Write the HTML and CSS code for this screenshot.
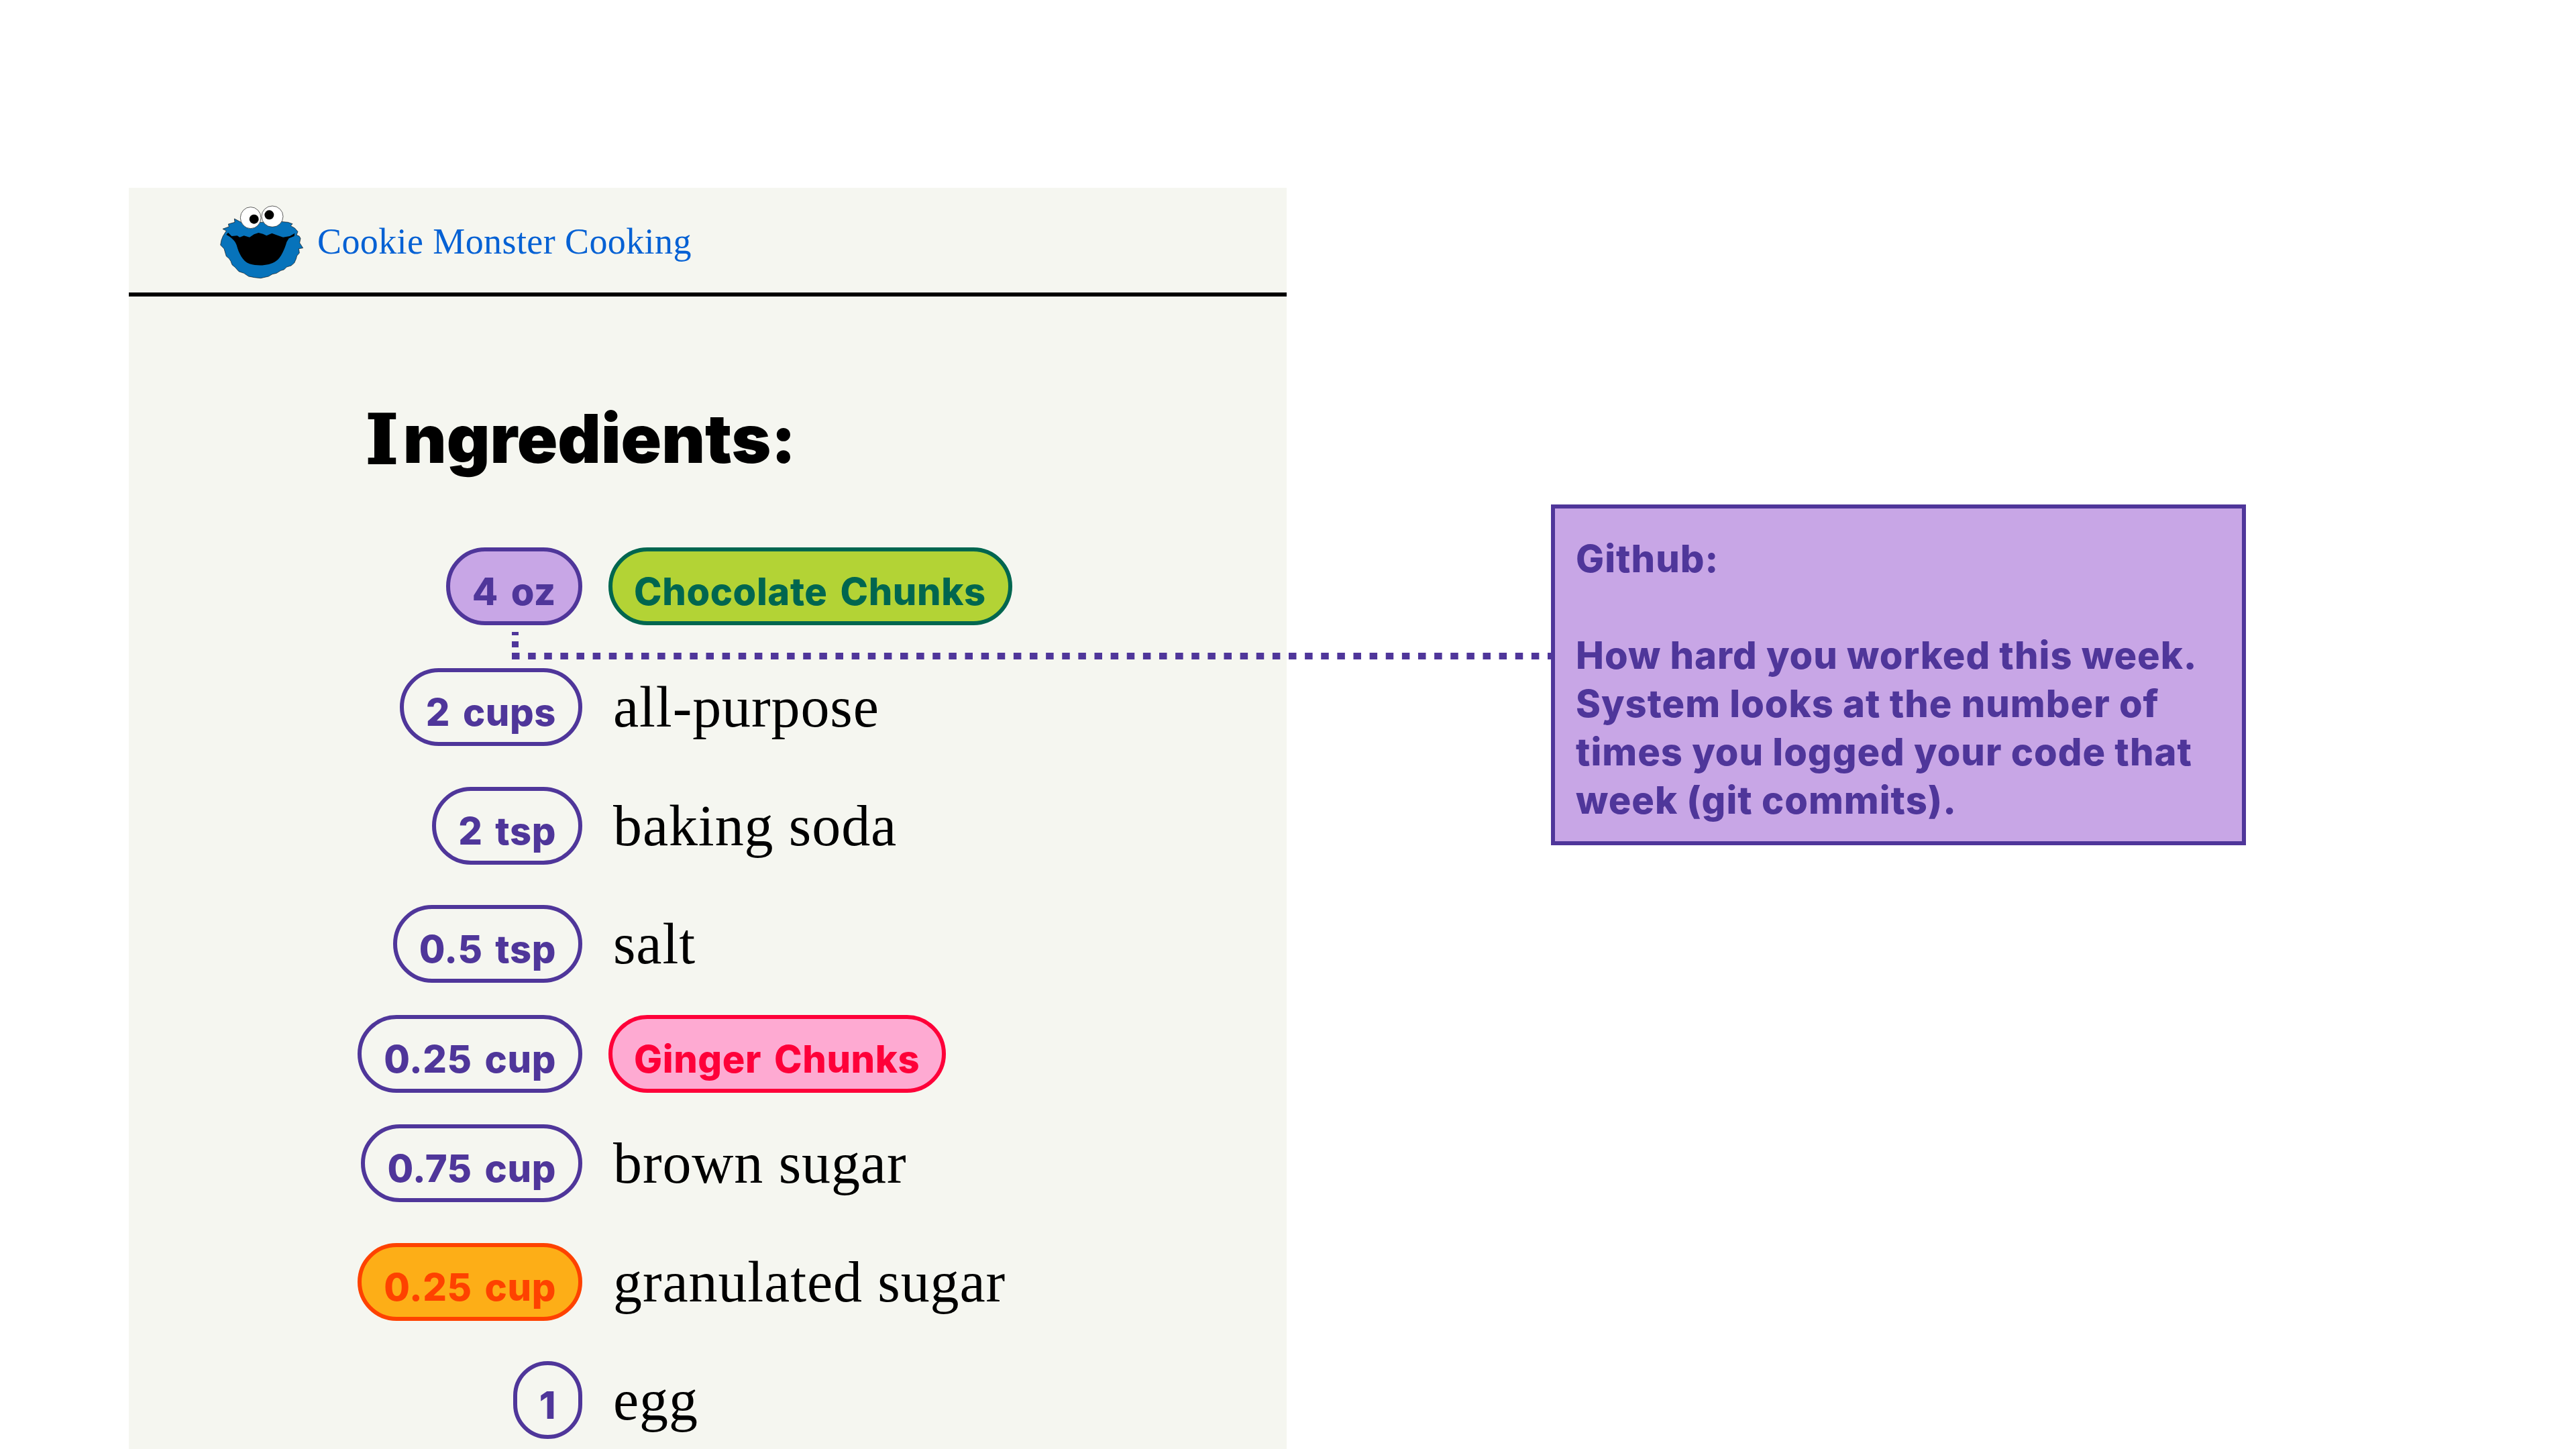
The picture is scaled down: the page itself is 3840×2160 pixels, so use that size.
FILE: index.html
```html
<!DOCTYPE html>
<html lang="en">
<head>
<meta charset="utf-8">
<title>Cookie Monster Cooking</title>
<link rel="stylesheet" href="styles.css">
</head>
<body>
<div class="stage">
  <main class="panel">
    <header class="topbar">
      <svg class="logo" viewBox="0 0 408 348" width="136" height="116" aria-hidden="true">
        <path class="fur" d="M82 72 L105 84 L120 92 L290 84 L300 86 L322 88 L342 95 L334 104 L352 114 L366 130 L360 145 L372 150 L378 160 L374 180 L389 203 L370 206 L373 225 L362 238 L358 252 L350 270 L336 282 L316 288 L304 300 L290 304 L270 316 L252 320 L235 330 L200 338 L172 335 L146 330 L125 316 L102 308 L86 290 L72 278 L66 262 L58 250 L46 240 L36 206 L20 190 L24 168 L31 150 L46 126 L30 118 L58 108 L55 96 L84 88 Z"/>
        <path class="mouth" d="M46 144 L54 134 L70 150 L95 148 L106 155 L125 148 L150 155 L170 142 L190 135 L210 140 L226 148 L250 137 L270 145 L300 155 L330 150 L352 137 L350 150 L326 160 L316 176 C308 205 292 245 268 262 C240 282 190 286 150 274 C118 262 102 226 92 190 C86 170 66 154 46 144 Z"/>
        <ellipse class="eye" cx="155" cy="68" rx="46" ry="48"/>
        <ellipse class="eye" cx="252" cy="62" rx="48" ry="47"/>
        <circle class="pupil" cx="170" cy="74" r="21"/>
        <circle class="pupil" cx="238" cy="55" r="21"/>
      </svg>
      <span class="brand">Cookie Monster Cooking</span>
    </header>
    <h1 class="title"><span class="title-cap">I</span>ngredients:</h1>
    <ul class="list">
      <li class="row row-first"><span class="qty qty-on">4 oz</span><span class="chip chip-green">Chocolate Chunks</span></li>
      <li class="row"><span class="qty">2 cups</span><span class="name">all-purpose</span></li>
      <li class="row"><span class="qty">2 tsp</span><span class="name">baking soda</span></li>
      <li class="row row-tight"><span class="qty">0.5 tsp</span><span class="name">salt</span></li>
      <li class="row row-tight"><span class="qty">0.25 cup</span><span class="chip chip-pink">Ginger Chunks</span></li>
      <li class="row"><span class="qty">0.75 cup</span><span class="name">brown sugar</span></li>
      <li class="row"><span class="qty qty-orange">0.25 cup</span><span class="name">granulated sugar</span></li>
      <li class="row"><span class="qty">1</span><span class="name">egg</span></li>
    </ul>
  </main>
  <svg class="connector" width="1549" height="44" viewBox="0 0 1549 44" aria-hidden="true">
    <path d="M5 2 V33" class="dash-v"/>
    <path d="M0 38 H1549" class="dash-h"/>
  </svg>
  <aside class="note">
    <p class="note-head">Github:</p>
    <p class="note-body">How hard you worked this week. System looks at the number of times you logged your code that week (git commits).</p>
  </aside>
</div>
</body>
</html>
```
FILE: styles.css
```css
html, body { margin: 0; padding: 0; background: #fff; }
body { width: 3840px; height: 2160px; overflow: hidden; }
.stage { position: relative; width: 3840px; height: 2160px; padding: 280px 0 0 192px; box-sizing: border-box; }
.panel { width: 1726px; height: 1880px; background: #f5f6f0; overflow: hidden; }

.topbar { box-sizing: border-box; height: 162px; border-bottom: 6px solid #000; display: flex; align-items: flex-start; padding: 22px 0 0 130px; }
.logo { flex: none; display: block; }
.fur { fill: #0773bb; stroke: #111; stroke-width: 2; stroke-linejoin: miter; }
.mouth { fill: #000; }
.eye { fill: #fff; stroke: #111; stroke-width: 2; }
.pupil { fill: #000; }
.brand { margin: 28px 0 0 15px; font: 400 54px/60px "Liberation Serif", serif; letter-spacing: 0.4px; color: #0561d4; white-space: nowrap; }

.title { box-sizing: border-box; margin: 0; padding: 162px 0 0 354px; height: 212px; font: 900 100px/100px Inter, sans-serif; color: #000; white-space: nowrap; }
.title-cap { font-family: "DejaVu Serif", serif; font-weight: 700; letter-spacing: 8px; -webkit-text-stroke: 4px #000; }

.list { list-style: none; margin: 162px 0 0; padding: 0; }
.row { display: grid; grid-template-columns: 676px auto; column-gap: 39px; align-items: start; height: 176.5px; }
.row-first { height: 180px; }
.row-tight { height: 163.5px; }

.qty, .chip { box-sizing: border-box; height: 116px; border: 6px solid #4f369a; border-radius: 58px; padding: 22px 33px 0; font: 800 56px/76px Inter, sans-serif; letter-spacing: 0.6px; word-spacing: 6px; white-space: nowrap; }
.qty { color: #4f369a; justify-self: end; }
.chip { justify-self: start; padding-left: 32px; }
.qty-on { background: #c8a6e6; }
.qty-orange { background: #fdae17; border-color: #fe4200; color: #fe4200; }
.chip-green { background: #b3d335; border-color: #00664f; color: #00664f; }
.chip-pink { background: #feaad2; border-color: #fe0039; color: #fe0039; }
.name { font: 400 86px/117px "Liberation Serif", serif; letter-spacing: 0.9px; color: #000; padding-left: 7px; white-space: nowrap; }

.connector { position: absolute; left: 763px; top: 940px; fill: none; stroke: #4f369a; stroke-width: 10; }
.dash-v { stroke-dasharray: 9 9; stroke-dashoffset: 4; }
.dash-h { stroke-dasharray: 11.5 12.625; }

.note { position: absolute; left: 2312px; top: 752px; width: 1036px; height: 508px; box-sizing: border-box; border: 6px solid #4f369a; background: #c8a6e6; padding: 39px 32px 39px 31px; font: 800 56px/72px Inter, sans-serif; letter-spacing: 1px; color: #4f369a; }
.note p { margin: 0; }
.note-head { margin-bottom: 72px !important; }
```
